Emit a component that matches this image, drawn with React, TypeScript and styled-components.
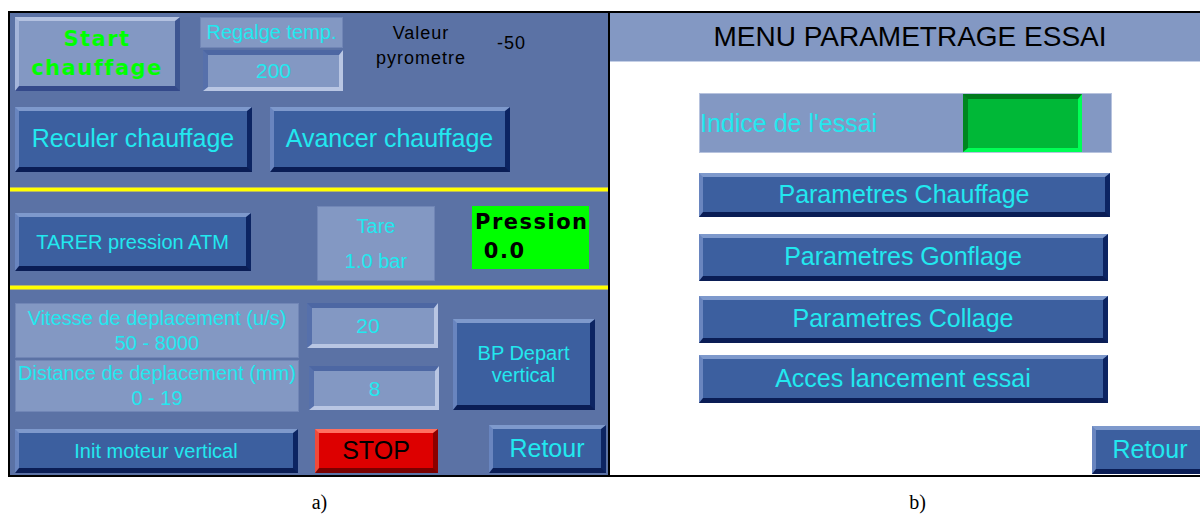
import styled, { createGlobalStyle, css } from 'styled-components';

const GlobalStyle = createGlobalStyle`
  html, body {
    margin: 0;
    padding: 0;
    background: #ffffff;
  }
  body {
    font-family: "Liberation Sans", Arial, sans-serif;
  }
`;

const CYAN = '#22e8ef';
const PANEL = '#5b72a5';
const LIGHT = '#8398c3';

const Figure = styled.div`
  width: 1200px;
  height: 515px;
  overflow: hidden;
  box-sizing: border-box;
  padding: 11px 0 0 8px;
`;

const Panels = styled.div`
  display: flex;
  width: 1212px;
`;

const LeftPanel = styled.div`
  flex: none;
  width: 602px;
  height: 466px;
  box-sizing: border-box;
  border: 2px solid #000;
  background: ${PANEL};
  display: flex;
  flex-direction: column;
`;

const RightPanel = styled.div`
  flex: none;
  width: 602px;
  height: 466px;
  box-sizing: border-box;
  border: 2px solid #000;
  border-left: none;
  background: #ffffff;
  display: flex;
  flex-direction: column;
`;

const Section = styled.div<{ $h: number; $pt?: number }>`
  height: ${(p) => p.$h}px;
  box-sizing: border-box;
  padding: ${(p) => p.$pt ?? 0}px 0 0 5px;
  display: flex;
  flex-direction: column;
`;

const Row = styled.div<{ $mt?: number; $align?: string }>`
  display: flex;
  align-items: ${(p) => p.$align ?? 'flex-start'};
  margin-top: ${(p) => p.$mt ?? 0}px;
`;

const Col = styled.div<{ $w?: number; $ml?: number; $mt?: number }>`
  display: flex;
  flex-direction: column;
  ${(p) => p.$w && `width: ${p.$w}px;`}
  margin-left: ${(p) => p.$ml ?? 0}px;
  margin-top: ${(p) => p.$mt ?? 0}px;
`;

const YellowRule = styled.div`
  height: 3px;
  background: #ffff00;
  box-shadow: 0 -1px 0 #b8b860, 0 1px 0 #b8b860;
`;

type Tone = 'blue' | 'light' | 'red';

const raisedTone = {
  blue: css`
    background: #3c5f9f;
    border-color: #7e99cc #0c2462 #0a1d55 #6985bf;
    color: ${CYAN};
  `,
  light: css`
    background: ${LIGHT};
    border-color: #b3c1e0 #3d5591 #34498a #a5b5da;
    color: #00ff00;
  `,
  red: css`
    background: #dd0000;
    border-color: #ff7060 #8c0000 #7a0000 #f04a3a;
    color: #000;
  `,
};

const Button = styled.div<{
  $w: number;
  $h: number;
  $tone?: Tone;
  $ml?: number;
  $mt?: number;
  $size?: number;
}>`
  flex: none;
  box-sizing: border-box;
  width: ${(p) => p.$w}px;
  height: ${(p) => p.$h}px;
  margin-left: ${(p) => p.$ml ?? 0}px;
  margin-top: ${(p) => p.$mt ?? 0}px;
  border-style: solid;
  border-width: 4px 5px 5px 4px;
  ${(p) => raisedTone[p.$tone ?? 'blue']}
  display: flex;
  align-items: center;
  justify-content: center;
  text-align: center;
  font-size: ${(p) => p.$size ?? 25}px;
  line-height: 1.1;
  white-space: pre-line;
`;

const BoldLabel = styled.span`
  font-weight: bold;
  font-family: "DejaVu Sans", "Liberation Sans", sans-serif;
  font-size: 21px;
  letter-spacing: 1.5px;
  line-height: 29px;
`;

const Field = styled.div<{
  $w: number;
  $h: number;
  $ml?: number;
  $mt?: number;
  $pr?: number;
  $green?: boolean;
}>`
  flex: none;
  box-sizing: border-box;
  width: ${(p) => p.$w}px;
  height: ${(p) => p.$h}px;
  margin-left: ${(p) => p.$ml ?? 0}px;
  margin-top: ${(p) => p.$mt ?? 0}px;
  padding-right: ${(p) => p.$pr ?? 0}px;
  border-style: solid;
  border-width: 5px 4px 4px 5px;
  border-color: ${(p) =>
    p.$green ? '#007a1c #00ff55 #00ff55 #00861f' : '#4d67a3 #b9c6e3 #b9c6e3 #5670ab'};
  background: ${(p) => (p.$green ? '#00b837' : LIGHT)};
  color: ${CYAN};
  font-size: 21px;
  display: flex;
  align-items: center;
  justify-content: center;
`;

const InfoBox = styled.div<{ $w: number; $h: number; $ml?: number; $mt?: number }>`
  flex: none;
  box-sizing: border-box;
  width: ${(p) => p.$w}px;
  height: ${(p) => p.$h}px;
  margin-left: ${(p) => p.$ml ?? 0}px;
  margin-top: ${(p) => p.$mt ?? 0}px;
  background: ${LIGHT};
  border: 1px solid #7186b6;
  color: ${CYAN};
  font-size: 20px;
  line-height: 25px;
  display: flex;
  flex-direction: column;
  align-items: center;
  justify-content: center;
  text-align: center;
`;

const Plain = styled.div<{ $ml?: number; $mt?: number; $w?: number }>`
  flex: none;
  ${(p) => p.$w && `width: ${p.$w}px;`}
  margin-left: ${(p) => p.$ml ?? 0}px;
  margin-top: ${(p) => p.$mt ?? 0}px;
  color: #000;
  font-size: 18px;
  letter-spacing: 1px;
  line-height: 25px;
  text-align: center;
`;

const PressureBox = styled.div`
  flex: none;
  box-sizing: border-box;
  width: 117px;
  height: 63px;
  margin: 15px 0 0 37px;
  padding: 2px 0 0 3px;
  background: #00ff00;
  color: #000;
  display: flex;
  flex-direction: column;
`;

const Header = styled.div`
  height: 48px;
  flex: none;
  background: ${LIGHT};
  border-bottom: 1px solid #c4cfe6;
  display: flex;
  align-items: center;
  justify-content: center;
  color: #000;
  font-size: 28px;
`;

const MenuBody = styled.div`
  padding: 31px 0 0 89px;
  display: flex;
  flex-direction: column;
`;

const IndexRow = styled.div`
  width: 413px;
  height: 60px;
  box-sizing: border-box;
  background: ${LIGHT};
  border: 1px solid #b7c3de;
  display: flex;
  align-items: center;
`;

const IndexLabel = styled.span`
  width: 263px;
  color: ${CYAN};
  font-size: 25px;
  white-space: nowrap;
`;

const Captions = styled.div`
  display: flex;
  font-family: "Liberation Serif", "Times New Roman", serif;
  font-size: 20px;
  color: #000;
`;

const Caption = styled.div<{ $w: number; $pl: number }>`
  width: ${(p) => p.$w}px;
  padding: 14px 0 0 ${(p) => p.$pl}px;
  box-sizing: border-box;
  text-align: center;
`;

export default function App() {
  return (
    <>
      <GlobalStyle />
      <Figure>
        <Panels>
          <LeftPanel>
            <Section $h={175} $pt={4}>
              <Row>
                <Button $w={165} $h={74} $tone="light">
                  <BoldLabel>{'Start\nchauffage'}</BoldLabel>
                </Button>
                <Col $w={143} $ml={20}>
                  <InfoBox $w={143} $h={31}>Regalge temp.</InfoBox>
                  <Field $w={140} $h={41} $ml={3} $mt={2}>200</Field>
                </Col>
                <Plain $ml={30} $mt={4} $w={96}>
                  Valeur
                  <br />
                  pyrometre
                </Plain>
                <Plain $ml={28} $mt={14}>-50</Plain>
              </Row>
              <Row $mt={16}>
                <Button $w={237} $h={65}>Reculer chauffage</Button>
                <Button $w={240} $h={65} $ml={18}>Avancer chauffage</Button>
              </Row>
            </Section>
            <YellowRule />
            <Section $h={95}>
              <Row>
                <Button $w={236} $h={58} $mt={22} $size={20}>TARER pression ATM</Button>
                <InfoBox $w={118} $h={75} $ml={66} $mt={15}>
                  <span>Tare</span>
                  <span style={{ marginTop: 10 }}>1.0 bar</span>
                </InfoBox>
                <PressureBox>
                  <BoldLabel>Pression</BoldLabel>
                  <BoldLabel>&nbsp;0.0</BoldLabel>
                </PressureBox>
              </Row>
            </Section>
            <YellowRule />
            <Section $h={184} $pt={14}>
              <Row>
                <Col $w={284}>
                  <InfoBox $w={284} $h={55}>
                    <span>Vitesse de deplacement (u/s)</span>
                    <span>50 - 8000</span>
                  </InfoBox>
                  <InfoBox $w={284} $h={52} $mt={2}>
                    <span>Distance de deplacement (mm)</span>
                    <span>0 - 19</span>
                  </InfoBox>
                </Col>
                <Col $ml={8}>
                  <Field $w={131} $h={45} $pr={10}>20</Field>
                  <Field $w={130} $h={44} $ml={2} $mt={18}>8</Field>
                </Col>
                <Button $w={142} $h={91} $ml={14} $mt={16} $size={20}>
                  {'BP Depart\nvertical'}
                </Button>
              </Row>
              <Row $mt={13} $align="flex-end">
                <Button $w={283} $h={44} $size={20}>Init moteur vertical</Button>
                <Button $w={123} $h={44} $ml={17} $tone="red">STOP</Button>
                <Button $w={117} $h={48} $ml={51}>Retour</Button>
              </Row>
            </Section>
          </LeftPanel>
          <RightPanel>
            <Header>MENU PARAMETRAGE ESSAI</Header>
            <MenuBody>
              <IndexRow>
                <IndexLabel>Indice de l'essai</IndexLabel>
                <Field $w={119} $h={58} $green />
              </IndexRow>
              <Button $w={411} $h={44} $mt={20}>Parametres Chauffage</Button>
              <Button $w={409} $h={47} $mt={17}>Parametres Gonflage</Button>
              <Button $w={409} $h={47} $mt={15}>Parametres Collage</Button>
              <Button $w={409} $h={48} $mt={12}>Acces lancement essai</Button>
              <Button $w={117} $h={48} $mt={23} $ml={393}>Retour</Button>
            </MenuBody>
          </RightPanel>
        </Panels>
        <Captions>
          <Caption $w={602} $pl={26}>a)</Caption>
          <Caption $w={600} $pl={30}>b)</Caption>
        </Captions>
      </Figure>
    </>
  );
}
